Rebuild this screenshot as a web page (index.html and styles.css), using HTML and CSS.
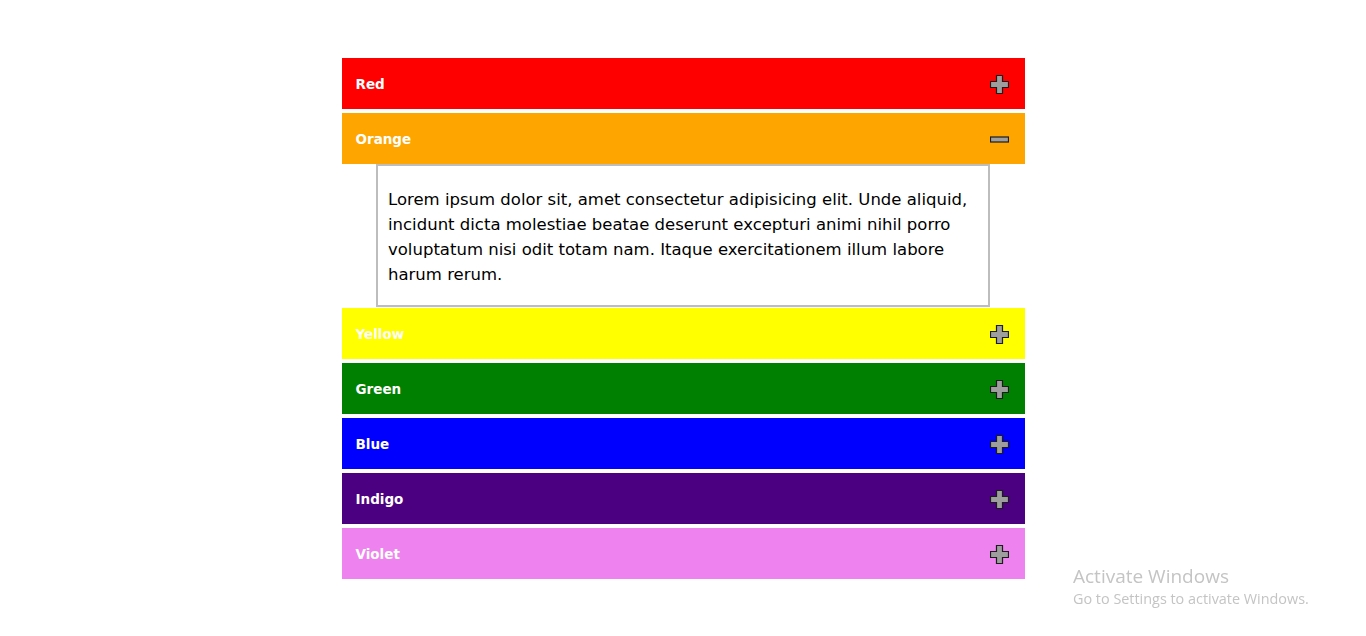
FILE: index.html
```html
<!DOCTYPE html>
<html lang="en">
<head>
<meta charset="utf-8">
<title>Accordion</title>
<link rel="stylesheet" href="styles.css">
</head>
<body>
<div class="accordion">
  <div class="head red"><span class="label">Red</span>
    <svg class="icon" viewBox="0 0 19 19"><polygon points="6.5,0.5 12.5,0.5 12.5,6.5 18.5,6.5 18.5,12.5 12.5,12.5 12.5,18.5 6.5,18.5 6.5,12.5 0.5,12.5 0.5,6.5 6.5,6.5"/></svg>
  </div>
  <div class="head orange open"><span class="label">Orange</span>
    <svg class="icon" viewBox="0 0 19 19"><rect x="0.5" y="7" width="18" height="5"/></svg>
  </div>
  <div class="panel">
    <p>Lorem ipsum dolor sit, amet consectetur adipisicing elit. Unde aliquid, incidunt dicta molestiae beatae deserunt excepturi animi nihil porro voluptatum nisi odit totam nam. Itaque exercitationem illum labore harum rerum.</p>
  </div>
  <div class="head yellow"><span class="label">Yellow</span>
    <svg class="icon" viewBox="0 0 19 19"><polygon points="6.5,0.5 12.5,0.5 12.5,6.5 18.5,6.5 18.5,12.5 12.5,12.5 12.5,18.5 6.5,18.5 6.5,12.5 0.5,12.5 0.5,6.5 6.5,6.5"/></svg>
  </div>
  <div class="head green"><span class="label">Green</span>
    <svg class="icon" viewBox="0 0 19 19"><polygon points="6.5,0.5 12.5,0.5 12.5,6.5 18.5,6.5 18.5,12.5 12.5,12.5 12.5,18.5 6.5,18.5 6.5,12.5 0.5,12.5 0.5,6.5 6.5,6.5"/></svg>
  </div>
  <div class="head blue"><span class="label">Blue</span>
    <svg class="icon" viewBox="0 0 19 19"><polygon points="6.5,0.5 12.5,0.5 12.5,6.5 18.5,6.5 18.5,12.5 12.5,12.5 12.5,18.5 6.5,18.5 6.5,12.5 0.5,12.5 0.5,6.5 6.5,6.5"/></svg>
  </div>
  <div class="head indigo"><span class="label">Indigo</span>
    <svg class="icon" viewBox="0 0 19 19"><polygon points="6.5,0.5 12.5,0.5 12.5,6.5 18.5,6.5 18.5,12.5 12.5,12.5 12.5,18.5 6.5,18.5 6.5,12.5 0.5,12.5 0.5,6.5 6.5,6.5"/></svg>
  </div>
  <div class="head violet"><span class="label">Violet</span>
    <svg class="icon" viewBox="0 0 19 19"><polygon points="6.5,0.5 12.5,0.5 12.5,6.5 18.5,6.5 18.5,12.5 12.5,12.5 12.5,18.5 6.5,18.5 6.5,12.5 0.5,12.5 0.5,6.5 6.5,6.5"/></svg>
  </div>
</div>
<div class="watermark">
  <div class="wm-title">Activate Windows</div>
  <div class="wm-sub">Go to Settings to activate Windows.</div>
</div>
</body>
</html>
```

FILE: styles.css
```css
* { box-sizing: border-box; }

body {
  margin: 0;
  padding-top: 58px;
  background: #ffffff;
  font-family: "Comic Sans MS", "DejaVu Sans", sans-serif;
}

.accordion {
  width: 683px;
  margin: 0 auto;
  display: flex;
  flex-direction: column;
}

.head {
  height: 51px;
  margin-bottom: 4px;
  padding: 1px 16px 0 14px;
  display: flex;
  align-items: center;
  justify-content: space-between;
  color: #ffffff;
}

.head.open { margin-bottom: 0; }

.label {
  font-weight: bold;
  font-size: 13.5px;
}

.icon {
  width: 19px;
  height: 19px;
  display: block;
}

.icon polygon,
.icon rect {
  fill: #9e9e9e;
  stroke: #1c1c1c;
  stroke-width: 1.2;
}

.red { background: #ff0000; }
.orange { background: #ffa500; }
.yellow { background: #ffff00; }
.green { background: #008000; }
.blue { background: #0000ff; }
.indigo { background: #4b0082; }
.violet { background: #ee82ee; }

.panel {
  width: 614px;
  margin: 0 auto 1px;
  border: 2px solid #bdbdbd;
  padding: 21px 10px 18px;
  background: #ffffff;
}

.panel p {
  margin: 0;
  font-size: 16.5px;
  line-height: 25px;
  color: #000000;
}

.watermark {
  position: fixed;
  left: 1073px;
  top: 563px;
  color: #c4c4c4;
  font-family: "Open Sans", "Noto Sans", sans-serif;
}

.wm-title {
  font-size: 19px;
  line-height: 26px;
}

.wm-sub {
  font-size: 14.4px;
  line-height: 20px;
}
```
